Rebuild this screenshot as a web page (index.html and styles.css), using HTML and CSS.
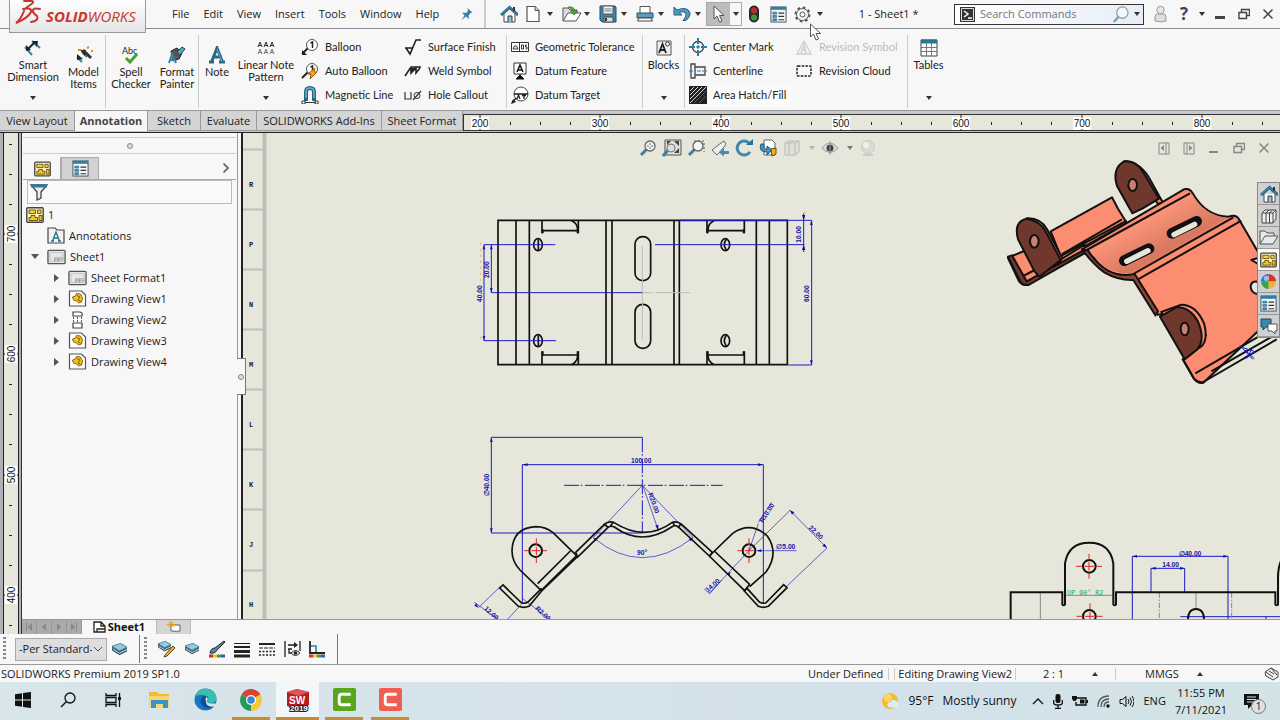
FILE: index.html
```html
<!DOCTYPE html>
<html lang="en">
<head>
<meta charset="utf-8">
<title>SOLIDWORKS Premium 2019 SP1.0</title>
<link rel="stylesheet" href="styles.css">
</head>
<body>
<svg class="defs" aria-hidden="true">
  <defs>
    <linearGradient id="valley" x1="0" y1="0" x2="1" y2="1"><stop offset="0" stop-color="#fc8d70"/><stop offset=".35" stop-color="#fc9579"/><stop offset=".62" stop-color="#d87860"/><stop offset=".8" stop-color="#fc8d70"/></linearGradient>
    <symbol id="caret" viewBox="0 0 6 4"><path d="M0 0h6L3 4z" fill="#333"/></symbol>
    <symbol id="home" viewBox="0 0 18 18"><path d="M4 9v8h11V9" fill="#fff" stroke="#444"/><path d="M1 10L9.500 2.500 18 10" fill="none" stroke="#23627f" stroke-width="3"/><path d="M1 9.500L9.500 2 17 9.500" fill="none" stroke="#4c9cc0"/><path d="M8 17v-6h4v6" fill="#8fc1da" stroke="#333"/><path d="M14 2v4" stroke="#333" stroke-width="2"/></symbol>
    <symbol id="props" viewBox="0 0 18 18"><rect x="1" y="1" width="16" height="16" fill="#f2f7fa" stroke="#3b5365"/><path d="M1 2.500h16" stroke="#2d7fa4" stroke-width="3"/><path d="M3 6.500h4v2H3zM3 10h4v2H3zM3 13.500h4v2H3z" fill="#4d9dc2" stroke="#1d4a63" stroke-width=".6"/><path d="M9 7.500h6M9 11h6M9 14.500h6" stroke="#333" stroke-width="1.200"/></symbol>
    <symbol id="drawing" viewBox="0 0 18 16"><rect x=".8" y=".8" width="16.400" height="14.400" rx="1" fill="#fff6c8" stroke="#444" stroke-width="1.400"/><path d="M3 3h6.500v3.500H3zM11.500 3H15v3.500h-3.500z" fill="#fbd23a" stroke="#4b3a00" stroke-width=".8"/><path d="M5 8.500h4v2h2.500v3H3v-3h2zM13 8.500h3v5h-3z" fill="#f5c51f" stroke="#4b3a00" stroke-width=".8"/></symbol>
    <symbol id="part" viewBox="0 0 18 17"><path d="M1 1h12l4 4v11H1z" fill="#fff" stroke="#555" stroke-width="1.200"/><path d="M4 7l3-1 1-2.500 4 .5 2 4-1 4-3 1-2-2-3-1z" fill="#f6c21c" stroke="#5d4500" stroke-width=".8"/><path d="M8.500 5.500l3 1.500-2 3 2.500 1" fill="none" stroke="#5d4500" stroke-width=".8"/></symbol>
    <symbol id="layers" viewBox="0 0 18 16"><path d="M1 5l9-3 7 4v4l-8 4-8-5z" fill="#3d5b68"/><path d="M1 4.500L10 1.500l7 4-8 4z" fill="#8fcbe3" stroke="#4a7f97"/><path d="M2 7.500l7 4.500 8-4" fill="none" stroke="#d7e6ec"/></symbol>
    <symbol id="sheet" viewBox="0 0 20 16"><rect x="1" y="1" width="18" height="14" rx="1" fill="#f4f4f4" stroke="#555" stroke-width="1.400"/><path d="M3 3h14v10H3z" fill="#e6e6e6" stroke="#bbb"/><path d="M8 13V9h9M12 9v4M8 11h9" fill="none" stroke="#999"/></symbol>
    <symbol id="pointer" viewBox="0 0 12 18"><path d="M1 1v13l3-3 2.500 6 2.500-1-2.500-5.500H11z" fill="#fff" stroke="#555" stroke-linejoin="round"/></symbol>
    <symbol id="lens" viewBox="0 0 18 18"><path d="M8 10l-6 6" stroke="#3b7fa3" stroke-width="3"/><circle cx="11" cy="7" r="5" fill="#f3f6f6" stroke="#666" stroke-width="1.300"/></symbol>
    <symbol id="search" viewBox="0 0 18 18"><path d="M7 11l-5 6" stroke="#7f9fb3" stroke-width="2.500"/><circle cx="11" cy="7" r="6" fill="#f5f9fc" stroke="#7f9fb3" stroke-width="1.300"/></symbol>
    <symbol id="restore" viewBox="0 0 12 12"><path d="M3.500 4V1.500h8v6H8.500M1 4.500h7.500v6H1z" fill="none" stroke="currentColor" stroke-width="1.400"/></symbol>
    <symbol id="close" viewBox="0 0 12 12"><path d="M1.500 1.500l9 9M10.500 1.500l-9 9" stroke="currentColor" stroke-width="1.500"/></symbol>
    <symbol id="camtasia" viewBox="0 0 24 24"><path d="M18.500 6.500H9Q6.500 6.500 6.500 9v6q0 2.500 2.500 2.500h9.500" fill="none" stroke="#fff" stroke-width="3"/></symbol>
  </defs>
</svg>

<header class="titlebar">
  <div class="logo">
    <svg width="27" height="28" viewBox="0 0 27 28"><g fill="none" stroke="#c8372d" stroke-width="2" stroke-linecap="round"><path d="M9 2h8q3 1-2 4l-4 3"/><path d="M8 10q9-2 8 3-3 6-15 11 5-4 8-12"/><path d="M25 10q-8-2-7 3 1 2 4 4 2 5-6 6"/></g></svg>
    <span><b>SOLID</b>WORKS</span>
  </div>
  <nav class="menu">
    <button>File</button><button>Edit</button><button>View</button><button>Insert</button><button>Tools</button><button>Window</button><button>Help</button>
  </nav>
  <button class="pin" aria-label="Pin menu"><svg width="14" height="14" viewBox="0 0 14 14"><path d="M7.500 1l5 4.500-2 .5-2 2.500.500 3.500L6 9.500 1.500 13 4.500 8.500 2 5.500l4 .5 2-2z" fill="#3a7fa5"/></svg></button>
  <div class="quick">
    <button class="q" aria-label="Home"><svg width="18" height="18"><use href="#home"/></svg></button>
    <button class="split" aria-label="New"><svg width="16" height="18" viewBox="0 0 16 18"><path d="M2 1.500h8l4 4v11H2z" fill="#fff" stroke="#555" stroke-width="1.200"/><path d="M10 1.500v4h4" fill="#ddd" stroke="#555"/></svg><svg class="caret"><use href="#caret"/></svg></button>
    <button class="split" aria-label="Open"><svg width="20" height="18" viewBox="0 0 20 18"><path d="M1 16V3h5l2 2h7v4" fill="#ddd" stroke="#555"/><path d="M1 16L6 8h13l-5 8z" fill="#fff" stroke="#555"/><path d="M6 2q6-1 7 4h2.500L12 10 8.500 6H11Q9 3 6 2z" fill="#50a62d" stroke="#2b6b14" stroke-width=".6"/></svg><svg class="caret"><use href="#caret"/></svg></button>
    <button class="split" aria-label="Save"><svg width="18" height="18" viewBox="0 0 18 18"><path d="M1 1h15l1 1v15H3l-2-2z" fill="#3e86aa" stroke="#234d63"/><path d="M4 1h10v8H4z" fill="#f4f4f4" stroke="#555"/><path d="M5.500 4h7M5.500 6h7" stroke="#777"/><path d="M5 12h9v5H5z" fill="#ddd" stroke="#444"/><path d="M7 13v3" stroke="#333" stroke-width="2"/></svg><svg class="caret"><use href="#caret"/></svg></button>
    <button class="split" aria-label="Print"><svg width="18" height="18" viewBox="0 0 18 18"><path d="M4 8V1.500h10V8" fill="#fff" stroke="#555"/><path d="M1 8h16v5H1z" fill="#599cc0" stroke="#285368"/><path d="M3 13h12l1.500 3h-15z" fill="#fff" stroke="#444"/></svg><svg class="caret"><use href="#caret"/></svg></button>
    <button class="split" aria-label="Undo"><svg width="18" height="18" viewBox="0 0 18 18"><path d="M1 2v8h8L6 7.500q6-2 7 2 0 3-3 6h3q5-4 4-8Q14 1 4 5z" fill="#4b9ac1" stroke="#28617e"/></svg><svg class="caret"><use href="#caret"/></svg></button>
    <div class="select-tool"><button aria-label="Select"><svg width="12" height="18"><use href="#pointer"/></svg></button><button aria-label="Selection options"><svg class="caret"><use href="#caret"/></svg></button></div>
    <button class="q" aria-label="Rebuild"><svg width="10" height="18" viewBox="0 0 10 18"><rect x=".5" y="1" width="9" height="16" rx="4.500" fill="#29352b" stroke="#222"/><circle cx="5" cy="5.500" r="3" fill="#bf2d25"/><circle cx="5" cy="12.500" r="3" fill="#3e9440"/></svg></button>
    <button class="q" aria-label="File properties"><svg width="17" height="17"><use href="#props"/></svg></button>
    <button class="q" aria-label="Options"><svg width="17" height="17" viewBox="0 0 17 17"><circle cx="8.500" cy="8.500" r="7" fill="none" stroke="#555" stroke-width="2" stroke-dasharray="2.750 2.750"/><circle cx="8.500" cy="8.500" r="6" fill="#f7f7f7" stroke="#555"/><circle cx="8.500" cy="8.500" r="2.500" fill="#fff" stroke="#555"/></svg></button>
    <svg class="caret gear-caret"><use href="#caret"/></svg>
  </div>
  <div class="doc-title">1 - Sheet1 *</div>
  <div class="search">
    <svg width="15" height="15" viewBox="0 0 15 15"><rect width="15" height="15" fill="#333"/><path d="M1.500 1.500h12v12h-12z" fill="none" stroke="#ddd"/><path d="M4 4l4 3-4 3M8 11h4" fill="none" stroke="#fff" stroke-width="1.500"/></svg>
    <input type="text" placeholder="Search Commands" aria-label="Search Commands">
    <svg width="17" height="17"><use href="#search"/></svg>
    <svg class="caret"><use href="#caret"/></svg>
  </div>
  <div class="window-controls">
    <button aria-label="Account"><svg width="13" height="18" viewBox="0 0 13 18"><path d="M1 16V12q0-3 3-3h5q3 0 3 3v4q-5 2-11 0z" fill="#ddd" stroke="#999"/><circle cx="6.500" cy="5" r="3.700" fill="#e8e8e8" stroke="#999"/></svg></button>
    <button class="help" aria-label="Help topics">?</button>
    <button aria-label="Help menu"><svg class="caret"><use href="#caret"/></svg></button>
    <button aria-label="Minimize"><svg width="10" height="10"><path d="M0 8.500h10" stroke="#444" stroke-width="3"/></svg></button>
    <button aria-label="Restore"><svg width="12" height="12"><use href="#restore"/></svg></button>
    <button aria-label="Close"><svg width="12" height="12"><use href="#close"/></svg></button>
  </div>
  <svg class="mouse" width="13" height="18"><use href="#pointer"/></svg>
</header>

<section class="ribbon" aria-label="Annotation tools">
  <button class="big w58 drop"><svg width="20" height="18" viewBox="0 0 20 18"><path d="M2 8l7 8M9 2l8 7" stroke="#2f89ad" stroke-width="2"/><path d="M5 10l7-7" stroke="#222" stroke-width="2"/><path d="M3 12V6l5 5zM9 2h6l-1 6z" fill="#222"/></svg><span>Smart<br>Dimension</span><svg class="caret"><use href="#caret"/></svg></button>
  <button class="big w43"><svg width="18" height="18" viewBox="0 0 18 18"><path d="M2 11l5 5M7 6l5 5" stroke="#2f89ad" stroke-width="2"/><path d="M2 14V8l6 5zM5 4h6l-1 6z" fill="#222"/><path d="M8 4l8 8" stroke="#333" stroke-width="3"/><path d="M3 4h3M12 2l2-1M16 5h2" stroke="#e28a2b" stroke-width="2"/></svg><span>Model<br>Items</span></button>
  <i class="sep"></i>
  <button class="big w50"><svg width="20" height="18" viewBox="0 0 20 18"><text x="1" y="8" class="abc">Abc</text><path d="M5 12l4 4 7-8" fill="none" stroke="#49a02e" stroke-width="3"/></svg><span>Spell<br>Checker</span></button>
  <button class="big w42"><svg width="18" height="18" viewBox="0 0 18 18"><path d="M3 5l6-3 5 5-3 6-6 2z" fill="#555" stroke="#222"/><path d="M9 6l5-5 3 2-5 6z" fill="#57a5ca" stroke="#244"/><path d="M1 17l3-9 4 9M2.500 14h5" fill="none" stroke="#3a83a8" stroke-width="2"/></svg><span>Format<br>Painter</span></button>
  <i class="sep"></i>
  <button class="big w36"><svg width="18" height="18" viewBox="0 0 18 18"><path d="M1 16h5M11 16h6M3.500 16L9 2l5.500 14M5 11h7" fill="none" stroke="#2c6684" stroke-width="3"/><path d="M9 3l5 13" stroke="#62adcf"/></svg><span>Note</span></button>
  <button class="big w62 drop"><svg width="18" height="18" viewBox="0 0 18 18"><path d="M1 8l2-5 2 5M7 8l2-5 2 5M13 8l2-5 2 5M1.500 6.500h3M7.500 6.500h3M13.500 6.500h3" fill="none" stroke="#333"/><path d="M1 15l2-5 2 5M7 15l2-5 2 5M13 15l2-5 2 5M1.500 13.500h3M7.500 13.500h3M13.500 13.500h3" fill="none" stroke="#777"/></svg><span>Linear Note<br>Pattern</span><svg class="caret"><use href="#caret"/></svg></button>
  <div class="stack w103">
    <button><svg width="18" height="18" viewBox="0 0 18 18"><path d="M1 16l6-6" stroke="#222" stroke-width="2"/><path d="M1 12v5h5z" fill="#222"/><circle cx="11" cy="7" r="5.500" fill="#fff" stroke="#555"/><path d="M9.500 5l2-1v6" fill="none" stroke="#222" stroke-width="1.500"/></svg>Balloon</button>
    <button><svg width="18" height="18" viewBox="0 0 18 18"><path d="M1 16l6-6" stroke="#222" stroke-width="2"/><circle cx="11" cy="7" r="5.500" fill="#fff" stroke="#555"/><path d="M9.500 5l2-1v6" fill="none" stroke="#222" stroke-width="1.500"/><path d="M14 6l-7 6h3l-1 5 7-7h-3z" fill="#f7a824" stroke="#9a5b0b"/></svg>Auto Balloon</button>
    <button><svg width="18" height="18" viewBox="0 0 18 18"><path d="M5 15V6q0-4 4-4t4 4v9" fill="none" stroke="#2d617d" stroke-width="4"/><path d="M5 12V6q0-4 4-4t4 4v6" fill="none" stroke="#68b3d4" stroke-width="1.500"/><path d="M4 16.500h11M1 15h3v3H1zM14 15h3v3h-3z" fill="#fff" stroke="#333"/></svg>Magnetic Line</button>
  </div>
  <div class="stack w106">
    <button><svg width="18" height="18" viewBox="0 0 18 18"><path d="M1 10h8M2 10l4 6 6-14h5" fill="none" stroke="#222" stroke-width="1.600"/></svg>Surface Finish</button>
    <button><svg width="18" height="18" viewBox="0 0 18 18"><path d="M1 14L7 5h10M7 5v6l5-5v5l4-5" fill="none" stroke="#222" stroke-width="1.600"/><path d="M7 6v5l5-5z" fill="#222"/></svg>Weld Symbol</button>
    <button><svg width="18" height="18" viewBox="0 0 18 18"><path d="M1 6v7h6V6M9 14l8-9" fill="none" stroke="#333" stroke-width="1.200"/><circle cx="13" cy="9.500" r="3" fill="none" stroke="#333"/></svg>Hole Callout</button>
  </div>
  <i class="sep"></i>
  <div class="stack w135">
    <button><svg width="18" height="18" viewBox="0 0 18 18"><path d="M.5 4.500h17v9H.5zM8.500 4.500v9M2 11h5L5.500 8h-2z" fill="#fff" stroke="#333"/><path d="M10.500 7h2v4h-2zM16 7h-1.500v2H16v2h-1.500" fill="none" stroke="#333"/></svg>Geometric Tolerance</button>
    <button><svg width="18" height="18" viewBox="0 0 18 18"><path d="M3 1h12v11H3z" fill="#fff" stroke="#333"/><path d="M6 10l3-7 3 7M7 8h4" fill="none" stroke="#111" stroke-width="1.500"/><path d="M9 12v3M5 17l4-4 4 4z" fill="#111" stroke="#111"/></svg>Datum Feature</button>
    <button><svg width="18" height="18" viewBox="0 0 18 18"><circle cx="10" cy="8" r="7" fill="#fff" stroke="#444"/><path d="M3 8h14M6 13l1.500-4L9 13M11 9.500h4M13 9.500V13M1 17l4-5" fill="none" stroke="#222" stroke-width="1.300"/><path d="M0 18l2-5 3 3z" fill="#222"/></svg>Datum Target</button>
  </div>
  <i class="sep"></i>
  <button class="big w41 drop"><svg width="18" height="18" viewBox="0 0 18 18"><path d="M2 2h14v14H2z" fill="#eee" stroke="#555"/><path d="M4 14l3.500-9L11 14M5.500 11h4" fill="none" stroke="#222" stroke-width="1.800"/><circle cx="12.500" cy="5" r="2" fill="#fff" stroke="#333"/></svg><span>Blocks</span><svg class="caret"><use href="#caret"/></svg></button>
  <i class="sep"></i>
  <div class="stack w106">
    <button><svg width="18" height="18" viewBox="0 0 18 18"><circle cx="9" cy="9" r="5.500" fill="none" stroke="#333" stroke-width="1.300"/><path d="M9 0v6M9 12v6M0 9h6M12 9h6M7.500 9h3M9 7.500v3" stroke="#2580a8" stroke-width="2"/></svg>Center Mark</button>
    <button><svg width="18" height="18" viewBox="0 0 18 18"><path d="M2 2h4v14H2zM6 5h10v8H6z" fill="#f4f4f4" stroke="#444" stroke-width="1.300"/><path d="M0 9h18" stroke="#2580a8" stroke-dasharray="4 1 2 1"/></svg>Centerline</button>
    <button class="hot"><svg width="18" height="18" viewBox="0 0 18 18"><path d="M0 0h18v18H0z" fill="#222"/><path d="M1 5l4-4M1 9l8-8M1 13L13 1M1 17L17 1" stroke="#ddd"/><path d="M5 17L17 5M10 17l7-7" stroke="#555"/></svg>Area Hatch/Fill</button>
  </div>
  <div class="stack w116">
    <button disabled><svg width="18" height="18" viewBox="0 0 18 18"><path d="M2 16L9 3l7 13zM6 15l3-8 2 8M7 12h4" fill="none" stroke="#ccc" stroke-width="1.300"/></svg>Revision Symbol</button>
    <button><svg width="18" height="18" viewBox="0 0 18 18"><rect x="2" y="4" width="14" height="10" rx="1" fill="none" stroke="#222" stroke-width="1.500" stroke-dasharray="2.500 1.200"/></svg>Revision Cloud</button>
  </div>
  <i class="sep"></i>
  <button class="big w41 drop"><svg width="18" height="18" viewBox="0 0 18 18"><path d="M1 1h16v16H1z" fill="#fff" stroke="#444"/><path d="M1 2.500h16" stroke="#277493" stroke-width="4"/><path d="M1 8.500h16M1 12.500h16M6.500 4v13M11.500 4v13" stroke="#777"/></svg><span>Tables</span><svg class="caret"><use href="#caret"/></svg></button>
</section>

<div class="tabrow">
  <nav class="tabs">
    <button class="t75">View Layout</button><button class="t73 on">Annotation</button><button class="t53">Sketch</button><button class="t56">Evaluate</button><button class="t125">SOLIDWORKS Add-Ins</button><button class="t80">Sheet Format</button>
  </nav>
  <svg class="hruler" aria-hidden="true">
    <g id="hticks"></g>
  </svg>
</div>

<main class="work">
  <svg class="vruler" aria-hidden="true"><g id="vticks"></g></svg>
  <div class="document">
    <div class="upper">
      <aside class="manager">
        <div class="grip-dot"><i class="dot"></i></div>
        <div class="mtabs">
          <button class="on" aria-label="Feature tree"><svg width="17" height="16"><use href="#drawing"/></svg></button>
          <button aria-label="Property manager"><svg width="17" height="17"><use href="#props"/></svg></button>
          <button class="more" aria-label="More tabs"><svg width="8" height="12" viewBox="0 0 8 12"><path d="M1.500 1.500L6 6l-4.500 4.500" fill="none" stroke="#555" stroke-width="1.600"/></svg></button>
        </div>
        <div class="filter"><svg width="18" height="18" viewBox="0 0 18 18"><path d="M1 2h16l-6 7v6l-4 2V9z" fill="#e9eff2" stroke="#444" stroke-width="1.300"/><path d="M1 3h16" stroke="#2a7ba1" stroke-width="3"/></svg><input type="text" aria-label="Filter tree"></div>
        <ul class="tree">
          <li class="l0"><svg width="18" height="16"><use href="#drawing"/></svg>1</li>
          <li class="l1"><i></i><svg width="18" height="17" viewBox="0 0 18 17"><path d="M1 4V1h7l2 2h7v13H1z" fill="#f2f2f2" stroke="#444" stroke-width="1.200"/><path d="M5.500 14L9 5l3.500 9M6.500 11h5M4 14h3M11 14h3" fill="none" stroke="#1c6f8e" stroke-width="1.300"/></svg>Annotations</li>
          <li class="l1"><i class="open"></i><svg width="19" height="16"><use href="#sheet"/></svg>Sheet1</li>
          <li class="l2"><i class="shut"></i><svg width="19" height="16"><use href="#sheet"/></svg>Sheet Format1</li>
          <li class="l2"><i class="shut"></i><svg width="19" height="17"><use href="#part"/></svg>Drawing View1</li>
          <li class="l2"><i class="shut"></i><svg width="19" height="18" viewBox="0 0 19 18"><path d="M5 1h7l2 1v3H5zM5 12h9v5H5z" fill="#fff" stroke="#444" stroke-width="1.200"/><path d="M5.500 6v6M9.500 6v6M13.500 6v6" stroke="#246f93" stroke-dasharray="2 1"/></svg>Drawing View2</li>
          <li class="l2"><i class="shut"></i><svg width="19" height="17"><use href="#part"/></svg>Drawing View3</li>
          <li class="l2"><i class="shut"></i><svg width="19" height="17"><use href="#part"/></svg>Drawing View4</li>
        </ul>
        <button class="handle" aria-label="Collapse panel"><i class="dot"></i></button>
      </aside>
      <div class="canvas">
        <svg class="sheet" role="img" aria-label="Sheet1 drawing views"><g transform="translate(-243 -133)">
          <g class="zone"><path d="M243 149.500h20M243 209.500h20M243 269.500h20M243 329.500h20M243 389.500h20M243 449.500h20M243 509.500h20M243 570.500h20" stroke-width="2"/><path d="M264.500 133v500" stroke-width="4"/></g>
          <g class="letters"><text x="249" y="187">R</text><text x="249" y="247">P</text><text x="249" y="307">N</text><text x="249" y="367">M</text><text x="249" y="427">L</text><text x="249" y="487">K</text><text x="249" y="547">J</text><text x="249" y="607">H</text></g>

          <g transform="translate(465 200) scale(.333333)" class="ink">
            <path d="M99 61h868v433H99zM153 61v433M193 61v433M423 61v433M441 61v433M627 61v433M643 61v433M874 61v433M913 61v433"/>
            <path d="M231 62v38M231 92h109M340 100V62M726 62v38M838 62v38M728 92h109M231 454v38M340 454v38M231 465h109M726 454v38M838 454v38M728 465h109"/>
            <path class="heavy" d="M233 88v12M338 88v12M728 88v12M836 88v12M233 454v12M338 454v12M728 454v12M836 454v12" stroke-width="8"/>
            <rect x="510" y="110" width="47" height="132" rx="23"/><rect x="510" y="313" width="47" height="132" rx="23"/>
            <path d="M320 62q18 8 18 28M747 62q-18 8-18 28M320 494q18-8 18-28M747 494q-18-8-18-28"/>
            <ellipse cx="219" cy="134" rx="13" ry="18"/><path d="M220 118v32"/>
            <ellipse cx="219" cy="422" rx="13" ry="18"/><path d="M220 406v32"/>
            <ellipse cx="781" cy="134" rx="13" ry="18"/><path d="M784 118q-12 16 0 32"/>
            <ellipse cx="781" cy="422" rx="13" ry="18"/><path d="M784 406q-12 16 0 32"/>
            <path class="faint" d="M532 138v280M532 278h32M572 278h104"/>
            <path class="dim" d="M57 134h214M57 422h216M57 134v288M79 134v144h453M570 134h448M643 61h397v434h-70M1016 40v116"/>
            <path class="arrow" d="M1016 61l-5-16h10zM1016 134l-5 16h10zM57 134l-4 14h8zM57 422l-4-14h8zM79 278l-4-14h8zM79 134l-4 14h8zM1039 61l-4 14h8zM1039 495l-4-14h8z"/>
            <path class="grips" d="M47 128v126M47 410v14M1020 34v8"/>
            <g class="note"><text transform="translate(51 306) rotate(-90)">40.00</text><text transform="translate(71 234) rotate(-90)">20.00</text><text transform="translate(1008 128) rotate(-90)">10.00</text><text transform="translate(1031 306) rotate(-90)">60.00</text></g>
          </g>

          <g transform="translate(465 425) scale(.333333)" class="ink">
            <path class="dim" d="M532 37H79v287h453"/>
            <path class="dim dash" d="M532 37v285"/>
            <path class="dim" d="M172 535V119h723v416"/>
            <path class="dim dash" d="M297 181h476"/>
            <path class="dim thin" d="M532 181L385 338M532 181l152 157M385 338q145 120 299 0M535 186l45 130M105 486L40 548M28 532l73 52M127 584l42-46M172 520l84 65M852 377l123-121 111 113-122 116M852 377L733 505M718 492l16 14 36-40M875 377h120M880 296l-28 81M880 292l40-60"/>
            <path class="arrow" d="M172 119l16-4v8zM895 119l-16-4v8zM79 37l-4 14h8zM79 324l-4-14h8zM580 316l-9-14 9-3zM385 338l13 4-7 7zM684 338l-13 4 7 7zM975 256l13 6-7 7zM1086 369l-14-6 7-7zM797 440l-4 13-7-7zM875 377l14-4v8zM40 548l-12-6 6-7z"/>
            <path d="M165 435q-24-26-24-58 2-68 71-72 30 0 52 18l70 68M165 435l64 62M218 476l98-98M335 392l-106 104"/>
            <path d="M338 394L230 498l-38 46q-16 6-32 0L104 489l10-9 56 54q10 2 18-2l42-42M332 382l86-84q12-10 28-6 94 60 176 0 16-4 28 6l92 84-8 12-94-88q-10-8-20 0-90 60-172 0-14-6-22 4l-88 86zM416 296l12 10M446 290l-10 14M622 290l8 14M650 296l-12 12"/>
            <path d="M733 393l70-68q54-38 104 8 36 52-4 108l-49 44M748 378l106 100M733 393l108 106M854 478l-16 20"/>
            <path d="M838 498l42 46q14 6 30 0l56-56-10-9-54 55q-9 2-18-2l-38-42z"/>
            <circle cx="212" cy="377" r="19" class="heavy"/><circle cx="852" cy="377" r="19" class="heavy"/>
            <path class="red" d="M177 377h14M199 377h27M234 377h12M214 340v20M214 366v24M214 398v16M817 377h14M839 377h27M852 340v20M852 366v24M852 398v16"/>
            <g class="note"><text x="498" y="113">100.00</text><text transform="translate(71 214) rotate(-90)">∅40.00</text><text x="516" y="390">90°</text><text transform="translate(549 206) rotate(70)">R20.00</text><text transform="translate(893 294) rotate(-56)">R10.00</text><text transform="translate(1030 310) rotate(43)">22.00</text><text x="934" y="371">∅5.00</text><text transform="translate(728 502) rotate(-40)">14.00</text><text transform="translate(56 552) rotate(43)">12.00</text><text transform="translate(210 552) rotate(43)">R2.00</text></g>
          </g>

          <g transform="translate(990 530) scale(.333333)" class="ink">
            <path class="dim" d="M427 285V79h287v206M483 186v-71h101v71M571 260h330M828 260v25"/>
            <path class="hidden-edge" d="M151 188v100M225 196h146M618 188v48"/><path class="hidden-edge dots" d="M508 188v100M725 188v100"/>
            <path class="heavy" d="M62 285v-98h155v36q4 6 8 0V100q10-62 73-62 62 0 72 62v123q4 6 8 0v-36h478v36q4 6 8 0v-80q0-44 20-70"/>
            <circle cx="298" cy="109" r="19" class="heavy"/><circle cx="298" cy="259" r="19" class="heavy"/><path class="heavy" d="M594 275q-2-38 24-38t24 38"/>
            <path class="red" d="M258 109h18M284 109h28M320 109h16M297 72v18M297 96v26M297 130v16M260 259h18M284 259h28M320 259h18M300 220v18M300 246v26"/>
            <path class="arrow" d="M427 79l14-4v8zM714 79l-14-4v8zM483 115l14-4v8zM584 115l-14-4v8z"/>
            <g class="note"><text x="566" y="77">∅40.00</text><text x="517" y="110">14.00</text><text x="232" y="195" class="bend">UP 90° R2</text></g>
          </g>

          <g transform="translate(990 130) scale(.333333)" class="solid">
            <path d="M182 304L366 202l18 34 26 42-194 110z" />
            <path d="M66 378l90-38 60 46 68-42 6 22-178 98q-16 4-26-12L54 384z"/>
            <path class="dark" d="M54 380l12-4 44 78 174-95v10L116 465q-18 2-26-12z"/>
            <path class="line" d="M100 438l116-62 194-104M216 372l180-104"/>
            <path d="M400 95q24-6 50 16 20 18 28 34l40 72-14 5-50-70-20-30z"/>
            <path class="dark" d="M427 250l-46-82q-16-54 22-74 36-2 56 32l48 80-50 30z"/>
            <ellipse cx="428" cy="165" rx="13" ry="18" class="hole"/>
            <path d="M110 265q42-2 62 34l44 84-10 20-60-80z"/>
            <path class="dark" d="M134 425L84 328q-14-54 26-62 38 6 56 36l46 88-64 50z"/>
            <ellipse cx="133" cy="334" rx="13" ry="19" class="hole"/>
            <path d="M276 358l306-180q18-4 26 12 40 70 108 70 24-8 32 10l70 120v200L640 758q-16 4-28-12l-34-58 70-72-60-72-86 10-70-108q-28 4-66-12-36-20-54-50z"/>
            <path class="bowl" d="M302 360l304-168q36 64 108 72L434 430q-90 6-132-70z"/>
            <path class="line" d="M290 360l310-170M430 432l300-170M444 448l310-176"/>
            <path d="M276 358l18 4q26 40 60 60 40 20 80 10l70 112-8 12-66-106q-44 2-86-22-32-22-68-70z" class="edge"/>
            <path class="slot" d="M403 392l74-36M546 310l74-36"/><path class="opening" d="M410 394l64-32M552 314l62-31"/>
            <path d="M514 546l60-22q44 0 68 56 16 60-18 76l-38 30z"/>
            <path class="dark" d="M584 688L510 560l52-29q40 2 62 44 24 56-4 84z"/>
            <ellipse cx="584" cy="597" rx="12" ry="19" class="hole"/>
            <path class="line" d="M578 686l34 60q12 14 28 10l220-128M616 730l210-122M664 724l182-104"/>
            <path class="gap-cut" d="M806 456q-24-6-24 16 4 20 24 20zM784 390l28-8v24z"/>
            <path class="scribble" d="M750 646l38 42M750 650l45 15-30 16M765 660l28 26M790 650l-20 35"/>
          </g>
        </g></svg>

        <div class="view-tools">
          <button aria-label="Zoom to fit"><svg width="18" height="18" viewBox="0 0 18 18"><use href="#lens"/><path d="M11 4v6M8 7h6" stroke="#666" stroke-dasharray="2 2"/></svg></button>
          <button aria-label="Zoom window"><svg width="20" height="18" viewBox="0 0 20 18"><path d="M3 1h16v15H3z" fill="#ddd" stroke="#555"/><path d="M12 2h5v5zM17 9v5h-5zM5 2h4L5 6z" fill="#444"/><path d="M7 10l-6 7" stroke="#3b7fa3" stroke-width="3"/><circle cx="9" cy="9" r="4" fill="#ddd" stroke="#777"/></svg></button>
          <button aria-label="Zoom area"><svg width="18" height="18" viewBox="0 0 18 18"><path d="M7 2h10v11" fill="none" stroke="#555" stroke-dasharray="2 2"/><use href="#lens"/></svg></button>
          <button aria-label="Previous view"><svg width="18" height="18" viewBox="0 0 18 18"><path d="M1 11l9-7 3-2 2 3-2 3-7 8z" fill="#eee" stroke="#666"/><path d="M18 12h-5V9l-5 4.500 5 4V15h5z" fill="#438bb4"/></svg></button>
          <button aria-label="Rotate"><svg width="20" height="20" viewBox="0 0 20 20"><path d="M16 14a7 7 0 1 1-1-9" fill="none" stroke="#3f86ab" stroke-width="3"/><path d="M12 7h7V1z" fill="#2c6f94"/></svg></button>
          <button aria-label="3D view"><svg width="18" height="18" viewBox="0 0 18 18"><path d="M5 1h8l3 3v12H5z" fill="#fff" stroke="#666"/><path d="M2 5q-3 8 6 8v3l5-5-5-4v3Q4 10 5 5z" fill="#4293bd" stroke="#24586f"/><path d="M12 10l5-1v6l-4 2z" fill="#edb41f" stroke="#664c00"/></svg></button>
          <button class="wide dim-icon" aria-label="Display style"><svg width="18" height="18" viewBox="0 0 18 18"><path d="M2 4l4-2h10v11l-4 3H2zM2 4h10v12M12 4l4-2M6 4v12" fill="#ddd" stroke="#888"/></svg><svg class="caret"><use href="#caret"/></svg></button>
          <button class="wide" aria-label="Hide or show"><svg width="18" height="14" viewBox="0 0 18 14"><path d="M1 7q8-10 16 0-8 9-16 0z" fill="#ddd" stroke="#999"/><circle cx="9" cy="7" r="3.500" fill="#444"/><path d="M9 0v14" stroke="#999"/></svg><svg class="caret"><use href="#caret"/></svg></button>
          <button class="dim-icon" aria-label="Scene"><svg width="16" height="18" viewBox="0 0 16 18"><circle cx="8" cy="8" r="6.500" fill="#ccc" stroke="#aaa"/><circle cx="6" cy="6" r="3" fill="#fff"/><path d="M3 16h10" stroke="#aaa" stroke-width="2"/></svg></button>
        </div>
        <div class="doc-controls">
          <button aria-label="Previous pane"><svg width="12" height="13" viewBox="0 0 12 13"><path d="M1 1h10v11H1zM8 1v11" fill="none" stroke="currentColor"/><path d="M6 3v6L2.500 6z" fill="currentColor"/></svg></button>
          <button aria-label="Next pane"><svg width="12" height="13" viewBox="0 0 12 13"><path d="M1 1h10v11H1zM4 1v11" fill="none" stroke="currentColor"/><path d="M6 3v6l3.500-3z" fill="currentColor"/></svg></button>
          <button aria-label="Minimize document"><svg width="12" height="12"><path d="M1 10h9" stroke="currentColor" stroke-width="2"/></svg></button>
          <button aria-label="Restore document"><svg width="12" height="12"><use href="#restore"/></svg></button>
          <button aria-label="Close document"><svg width="12" height="12"><use href="#close"/></svg></button>
        </div>
        <nav class="taskpane">
          <button aria-label="Resources"><svg width="18" height="18"><use href="#home"/></svg></button>
          <button aria-label="Design library"><svg width="18" height="18" viewBox="0 0 18 18"><path d="M2 6l3-3h11v9l-3 4H2zM2 6h11v10M13 6l3-3M6 6v10M9.500 6v10M6 6l3-3M9.500 6l3-3" fill="#eee" stroke="#444"/></svg></button>
          <button aria-label="File explorer"><svg width="19" height="17" viewBox="0 0 19 17"><path d="M1 15V2h5l2 2h7v3M1 15L6 7h13l-5 8z" fill="#e8e8e8" stroke="#555"/></svg></button>
          <button class="on" aria-label="View palette"><svg width="17" height="16"><use href="#drawing"/></svg></button>
          <button aria-label="Appearances"><svg width="17" height="17" viewBox="0 0 16 16"><path d="M8 8V1a7 7 0 0 0-7 7z" fill="#2b6fd0"/><path d="M8 8V1a7 7 0 0 1 7 7z" fill="#d63429"/><path d="M8 8h7a7 7 0 0 1-7 7z" fill="#f1b72b"/><path d="M8 8v7a7 7 0 0 1-7-7z" fill="#3ba144"/><circle cx="6" cy="5" r="2.500" fill="#fff" opacity=".55"/></svg></button>
          <button aria-label="Custom properties"><svg width="17" height="17"><use href="#props"/></svg></button>
          <button aria-label="Forum"><svg width="18" height="16" viewBox="0 0 18 16"><path d="M1 1h10v8H6l-3 3V9H1z" fill="#3c88ad" stroke="#245"/><path d="M8 6h9v7h-2v3l-3-3H8z" fill="#fff" stroke="#555"/></svg></button>
        </nav>
      </div>
    </div>
    <div class="sheettabs">
      <button class="nav" aria-label="First sheet"><svg width="8" height="8" viewBox="0 0 8 8"><path d="M7 0v8L3 4zM1 0h1v8H1z" fill="#888"/></svg></button><button class="nav" aria-label="Previous sheet"><svg width="8" height="8" viewBox="0 0 8 8"><path d="M6 0v8L2 4z" fill="#888"/></svg></button><button class="nav" aria-label="Next sheet"><svg width="8" height="8" viewBox="0 0 8 8"><path d="M2 0v8l4-4z" fill="#888"/></svg></button><button class="nav" aria-label="Last sheet"><svg width="8" height="8" viewBox="0 0 8 8"><path d="M1 0v8l4-4zM6 0h1v8H6z" fill="#888"/></svg></button>
      <button class="current"><svg width="13" height="12" viewBox="0 0 13 12"><path d="M1 1h7l4 4v6H1zM8 1v4h4M4 11V8h8" fill="#fff" stroke="#222" stroke-width="1.300"/></svg>Sheet1</button>
      <button class="add" aria-label="Add sheet"><svg width="14" height="12" viewBox="0 0 14 12"><path d="M4 4h9v6h-2l-2 1-1-1H4z" fill="#fff" stroke="#567"/><path d="M4 0v7M0 3.500h8M1.500 1l5 5M6.500 1l-5 5" stroke="#e99a1f"/></svg></button>
    </div>
  </div>
</main>

<section class="layerbar" aria-label="Line format">
  <i class="grip"></i>
  <select aria-label="Layer"><option>-Per Standard-</option></select>
  <button aria-label="Layer properties"><svg width="17" height="15"><use href="#layers"/></svg></button>
  <i class="vsep"></i><i class="grip"></i>
  <div class="format">
    <button aria-label="Change layer"><svg width="19" height="18" viewBox="0 0 19 18"><use href="#layers" width="15" height="13"/><path d="M8 15l8-9 2 2-8 8-3 1z" fill="#f3b33a" stroke="#5f4310"/></svg></button>
    <button aria-label="Layer"><svg width="16" height="14"><use href="#layers"/></svg></button>
    <button aria-label="Line color"><svg width="18" height="18" viewBox="0 0 18 18"><path d="M2 13q1-5 5-5l9-7 1 1-8 8q-2 4-7 3z" fill="#4b8dac" stroke="#222"/><path d="M1 16h4" stroke="#c33" stroke-width="3"/><path d="M5 16h4" stroke="#eec32a" stroke-width="3"/><path d="M9 16h4" stroke="#3a9f55" stroke-width="3"/><path d="M13 16h4" stroke="#4752ba" stroke-width="3"/></svg></button>
    <button aria-label="Line thickness"><svg width="18" height="18" viewBox="0 0 18 18"><path d="M1 3.500h16" stroke="#222"/><path d="M1 7h16" stroke="#222" stroke-width="2"/><path d="M1 11.500h16M1 16h16" stroke="#222" stroke-width="3"/></svg></button>
    <button aria-label="Line style"><svg width="18" height="18" viewBox="0 0 18 18"><path d="M1 4h16" stroke="#222" stroke-width="2"/><path d="M1 8h16" stroke="#222" stroke-dasharray="4 1"/><path d="M1 11.500h16M1 15h16" stroke="#222" stroke-width="1.500" stroke-dasharray="2 1.500"/></svg></button>
    <button aria-label="Hide or show edges"><svg width="18" height="18" viewBox="0 0 18 18"><path d="M2 1v16M5 5h8M17 1v10M5 9h4M6 9v4h3" fill="none" stroke="#222" stroke-width="1.300"/><path d="M11 2l4 3-4 3z" fill="#222"/><path d="M8 13q5-5 9 0-5 5-9 0z" fill="#ddd" stroke="#333"/><circle cx="12.500" cy="13" r="1.700" fill="#222"/></svg></button>
    <button aria-label="Color display mode"><svg width="18" height="18" viewBox="0 0 18 18"><path d="M2 6h6v6" fill="none" stroke="#2f7fa5" stroke-width="1.600"/><path d="M2 1v12h15" fill="none" stroke="#222" stroke-width="1.800"/><path d="M1 16h4" stroke="#c33" stroke-width="3"/><path d="M5 16h4" stroke="#eec32a" stroke-width="3"/><path d="M9 16h4" stroke="#3a9f55" stroke-width="3"/><path d="M13 16h4" stroke="#4752ba" stroke-width="3"/></svg></button>
  </div>
</section>

<footer class="status">
  <span class="product">SOLIDWORKS Premium 2019 SP1.0</span>
  <span class="s-def">Under Defined</span><i class="gap"></i>
  <span class="s-edit">Editing Drawing View2</span>
  <button class="s-scale">2 : 1 <svg class="caret up"><use href="#caret"/></svg></button>
  <button class="s-unit">MMGS <svg class="caret up"><use href="#caret"/></svg></button>
  <svg width="15" height="14" viewBox="0 0 15 14"><path d="M1 5l6-4 7 4v5l-5 3-7-4zM7 1l6 7M2 5l7 5M5 4l5 3" fill="#eee" stroke="#444"/></svg>
</footer>

<nav class="taskbar">
  <button aria-label="Start"><svg width="16" height="16" viewBox="0 0 16 16"><path d="M0 2.200l7-1v6.300H0zM8 1l8-1v7.500H8zM0 8.500h7v6.300l-7-1zM8 8.500h8V16l-8-1z" fill="#111"/></svg></button>
  <button aria-label="Search"><svg width="16" height="16" viewBox="0 0 16 16"><circle cx="10" cy="6" r="5" fill="none" stroke="#111" stroke-width="1.300"/><path d="M6.500 9.500L1 15" stroke="#111" stroke-width="1.500"/></svg></button>
  <button aria-label="Task view"><svg width="16" height="16" viewBox="0 0 16 16"><path d="M1 1v2.500h10V1M1 5.500h10v5H1zM1 15v-2.500h10V15M14.500 1v14" fill="none" stroke="#111" stroke-width="1.300"/><path d="M13 5h3v3h-3z" fill="#111"/></svg></button>
  <button class="gap3" aria-label="File Explorer"><svg width="21" height="18" viewBox="0 0 21 18"><path d="M0 1h8l2 2h10v14H0z" fill="#f4b93a"/><path d="M0 5h20v12H0z" fill="#fbd667"/><path d="M2 17V9h17v8h-5v-4H7v4z" fill="#3a91d0"/></svg></button>
  <button aria-label="Edge"><svg width="23" height="23" viewBox="0 0 23 23"><circle cx="11.500" cy="11.500" r="11" fill="#1578c4"/><path d="M1 9Q4 0 12 .5q10 1 10.500 10-.5 4-5 4.500-4 0-4-2 2-3-1-5Q5 5 1 9z" fill="#37bfa9"/><path d="M9 8q-6 8 3 12 5 1 8-2-8 1-8-5 3-3 0-5z" fill="#0d4f98"/><path d="M12 9q3 1 1 4 0 2 4 2.500h6v2l-3 1q-8 1-8-5-1-3 0-4.500z" fill="#d6e4ec"/></svg></button>
  <button class="run" aria-label="Chrome"><svg width="22" height="22" viewBox="0 0 22 22"><path d="M11 11L1.500 5.500A11 11 0 0 1 20.500 5.500z" fill="#da4437"/><path d="M11 11L1.500 5.500A11 11 0 0 0 11 22z" fill="#249c59"/><path d="M11 11L20.500 5.500A11 11 0 0 1 11 22z" fill="#f6c83a"/><circle cx="11" cy="11" r="5" fill="#fff"/><circle cx="11" cy="11" r="3.800" fill="#4285c9"/></svg></button>
  <button class="run active" aria-label="SOLIDWORKS 2019"><svg width="24" height="24" viewBox="0 0 24 24"><path d="M1 4l10-3 12 3v13l-10 6L1 18z" fill="#b91c22"/><path d="M1 4l11 4 11-4-12-3z" fill="#de5658"/><path d="M12 8v14" stroke="#6f0c10"/><text x="3" y="16" class="sw">SW</text><text x="4" y="23" class="yr">2019</text></svg></button>
  <button class="run" aria-label="Camtasia"><svg class="cam green" width="23" height="23"><use href="#camtasia"/></svg></button>
  <button class="run" aria-label="Camtasia Recorder"><svg class="cam coral" width="23" height="23"><use href="#camtasia"/></svg></button>
  <div class="tray">
    <button class="weather"><svg width="18" height="18" viewBox="0 0 18 18"><circle cx="9" cy="9" r="8" fill="#f6b92f"/><circle cx="7" cy="6" r="4" fill="#fbd46a"/><path d="M7 15q-2-5 3-5 2-4 5-1 4 1 2 5-2 3-10 1z" fill="#dcecf8"/></svg><span>95°F</span><span>Mostly sunny</span></button>
    <button aria-label="Hidden icons"><svg width="12" height="8" viewBox="0 0 12 8"><path d="M1 7l5-5 5 5" fill="none" stroke="#111" stroke-width="1.300"/></svg></button>
    <button aria-label="Microphone"><svg width="10" height="15" viewBox="0 0 10 15"><rect x="2.500" width="5" height="9" rx="2" fill="#111"/><path d="M.7 6v3q0 2 4.300 2t4.300-2V6M5 11v3M2 14.300h6" fill="none" stroke="#111" stroke-width="1.300"/></svg></button>
    <button aria-label="Battery"><svg width="16" height="12" viewBox="0 0 16 12"><path d="M5 3h9v7H4V7" fill="none" stroke="#111" stroke-width="1.400"/><path d="M8 4.500h4.500v4H8zM14.500 5H16v3h-1.500zM0 1h5v3L3.500 6h-2L0 4z" fill="#111"/></svg></button>
    <button aria-label="Wi-Fi"><svg width="13" height="13" viewBox="0 0 13 13"><path d="M1 12Q1 1 12 1M4 12q0-8 8-8M7 12q0-5 5-5" fill="none" stroke="#555" stroke-width="1.300"/><circle cx="11" cy="11" r="1.700" fill="#111"/></svg></button>
    <button aria-label="Volume"><svg width="15" height="13" viewBox="0 0 15 13"><path d="M1 4.500h2.500L7 1.500v10L3.500 8.500H1zM9 4q2 2.500 0 5M11 2.500q3 4 0 8M13 1q4 5.500 0 11" fill="none" stroke="#111"/></svg></button>
    <button class="lang">ENG</button>
    <button class="clock">11:55 PM<br>7/11/2021</button>
    <button class="notify" aria-label="Notifications"><svg width="16" height="15" viewBox="0 0 16 15"><path d="M0 0h15v11H8l-4 4v-4H0z" fill="#111"/><path d="M3 3h9M3 5.500h9M3 8h6" stroke="#d6e4ec"/></svg><b>1</b></button>
  </div>
</nav>
<script src="rulers.js"></script>
</body>
</html>
```

FILE: rulers.js
```js
const NS = "http://www.w3.org/2000/svg";

function add(parent, tag, attrs, text) {
  const el = document.createElementNS(NS, tag);
  for (const key in attrs) el.setAttribute(key, attrs[key]);
  if (text) el.textContent = text;
  parent.appendChild(el);
}

// One hundred sheet millimetres take 120.3 screen pixels.
const STEP = 120.3;

const across = document.getElementById("hticks");
const width = across.parentNode.getBoundingClientRect().width;
for (let i = 0; 17 + i * STEP < width; i++) {
  const x = Math.round(16 + i * STEP);
  add(across, "rect", { x: x - 9, y: 2, width: 18, height: 13, fill: "#fff" });
  add(across, "path", { d: `M${x} 0v3M${x} 14v3`, stroke: "#222" });
  add(across, "text", { x: x, y: 12, "text-anchor": "middle" }, String(200 + i * 100));
  for (let k = 1; k < 4; k++) {
    add(across, "path", { d: `M${Math.round(x + k * 30) + 0.5} 7v3`, stroke: "#222" });
  }
}

const down = document.getElementById("vticks");
const height = down.parentNode.getBoundingClientRect().height;
for (let i = 0; (i - 1) * STEP + 110 < height; i++) {
  const y = Math.round(101 + (i - 1) * STEP);
  for (let k = 1; k < 4; k++) {
    add(down, "path", { d: `M9 ${Math.round(y + k * 30) + 0.5}h3`, stroke: "#222" });
  }
  if (y < 10) continue;
  add(down, "rect", { x: 5, y: y - 9, width: 12, height: 18, fill: "#fff" });
  add(down, "path", { d: `M3 ${y}h2M17 ${y}h2`, stroke: "#222" });
  add(down, "text", { transform: `translate(15 ${y}) rotate(-90)`, "text-anchor": "middle" }, String(800 - i * 100));
}
```

FILE: styles.css
```css
* { box-sizing: border-box; }
body {
  margin: 0;
  height: 100vh;
  display: flex;
  flex-direction: column;
  overflow: hidden;
  background: #f7f7f7;
  color: #222;
  font: 11px/12px "Open Sans", "Noto Sans", sans-serif;
}
button, input, select { font: inherit; color: inherit; }
button { border: 0; padding: 0; background: none; display: flex; align-items: center; justify-content: center; white-space: nowrap; }
svg { flex: none; display: block; }
.defs { position: absolute; width: 0; height: 0; }
.caret { width: 6px; height: 4px; }
.up { transform: rotate(180deg); }
.dot { width: 6px; height: 6px; border: 1px solid #888; border-radius: 50%; background: #ddd; flex: none; }

/* Title bar */
.titlebar { position: relative; z-index: 2; flex: none; height: 29px; display: flex; align-items: center; border-bottom: 1px solid #8c8c90; }
.logo { align-self: flex-start; flex: none; width: 137px; height: 33px; margin-left: 9px; padding-left: 5px; display: flex; align-items: center; gap: 4px; background: linear-gradient(#fff, #e4e4e6); border: 1px solid #999; border-top: 0; color: #c8372d; font-size: 15px; font-style: italic; }
.logo svg { margin-top: -6px; }
.menu { flex: none; display: flex; gap: 14px; margin-left: 26px; }
.pin { width: 46px; height: 28px; margin-left: 1px; padding-left: 10px; border-right: 2px solid #ccc; }
.quick { flex: none; display: flex; align-items: center; margin-left: 11px; }
.q { width: 24px; height: 24px; }
.split { width: 37px; height: 24px; justify-content: space-between; padding: 0 5px 0 4px; }
.select-tool { display: flex; height: 24px; border: 1px solid #aaa; }
.select-tool button { width: 23px; background: #bcbcbe; }
.select-tool button + button { width: 11px; background: none; }
.gear-caret { margin-left: 3px; }
.doc-title { flex: 1; text-align: center; white-space: nowrap; }
.search { flex: none; width: 190px; height: 21px; display: flex; align-items: center; padding: 0 3px 0 5px; gap: 5px; border: 1px solid #333; background: linear-gradient(90deg, #fff, #e8eef7); }
.search input { flex: 1; min-width: 0; border: 0; padding: 0; background: none; }
.search input::placeholder { color: #777; opacity: 1; }
.window-controls { flex: none; display: flex; align-items: center; margin-left: 4px; }
.window-controls button { width: 24px; height: 24px; color: #444; }
.window-controls .help { font-size: 17px; font-weight: 700; }
.window-controls button:nth-child(3) { width: 12px; }
.mouse { position: absolute; left: 809px; top: 23px; }

/* Ribbon */
.ribbon { flex: none; height: 82px; display: flex; padding-left: 4px; border-bottom: 1px solid #999; font-family: Lato, "Open Sans", sans-serif; }
.big { height: 80px; flex: none; flex-direction: column; justify-content: flex-start; padding-top: 17px; gap: 2px; }
.big.drop { padding-top: 10px; }
.big.drop .caret { margin-top: auto; margin-bottom: 9px; }
.sep { width: 1px; height: 73px; margin-top: 6px; background: #ccc; flex: none; }
.stack { flex: none; display: flex; flex-direction: column; padding: 6px 0 0 4px; }
.stack button { height: 24px; justify-content: flex-start; gap: 6px; }
.stack button:disabled { color: #bbb; }
.hot { background: #fafafa; }
.w58 { width: 58px; } .w43 { width: 43px; } .w50 { width: 50px; } .w42 { width: 42px; }
.w36 { width: 36px; } .w62 { width: 62px; } .w103 { width: 103px; }
.w135 { width: 135px; } .w41 { width: 41px; } .w106 { width: 106px; } .w116 { width: 116px; }
.abc { font-size: 9px; fill: #222; }

/* Tabs and rulers */
.tabrow { flex: none; height: 22px; display: flex; background: #c6c7ca; border-bottom: 1px solid #222; }
.tabs { flex: none; display: flex; height: 20px; }
.tabs button { background: #d4d4d4; border: 1px solid #999; border-left: 0; border-top: 0; }
.tabs .on { background: #f7f7f7; font-weight: 700; border-bottom: 0; color: #444; }
.t75 { width: 75px; } .t73 { width: 73px; } .t53 { width: 53px; } .t56 { width: 56px; } .t125 { width: 125px; } .t80 { width: 81px; }
.hruler { flex: 1; min-width: 0; height: 17px; margin-top: 3px; background: #e6e6da; border: 1px solid #333; border-right: 0; }
.hruler text, .vruler text { font: 10px "Liberation Sans", sans-serif; fill: #111; }
.work { flex: 1; min-height: 0; display: flex; }
.vruler { width: 22px; height: 100%; background: linear-gradient(90deg, #b0b1b6 3px, #222 3px, #222 4px, #e6e6da 4px, #e6e6da 18px, #222 18px, #222 19px, #b0b1b6 19px, #b0b1b6 21px, #333 21px); }
.document { flex: 1; min-width: 0; display: flex; flex-direction: column; }
.upper { flex: 1; min-height: 0; display: flex; }

/* Manager panel */
.manager { position: relative; z-index: 1; flex: none; width: 221px; padding: 4px 5px 0 1px; background: linear-gradient(90deg, #f7f7f7 215px, #999 215px, #999 216px, #f7f7f7 216px); border-right: 2px solid #222; }
.grip-dot { height: 17px; display: flex; align-items: center; justify-content: center; border: 1px solid #ccc; border-width: 1px 0; }
.mtabs { display: flex; height: 26px; padding-top: 3px; border-bottom: 1px solid #aaa; }
.mtabs button { width: 38px; background: #d2d2d4; border: 1px solid #aaa; border-bottom: 0; }
.mtabs .on { background: #f7f7f7; border-color: transparent #aaa transparent transparent; }
.mtabs .more { width: 20px; margin-left: auto; background: none; border: 0; }
.filter { display: flex; align-items: center; height: 24px; margin: 0 4px; padding-left: 2px; border: 1px solid #bbb; background: #fafafa; }
.filter input { flex: 1; min-width: 0; border: 0; padding: 0; background: none; }
.tree { margin: 0; padding: 0; list-style: none; }
.tree li { height: 21px; display: flex; align-items: center; gap: 4px; padding-left: 3px; white-space: nowrap; }
.tree .l1 { padding-left: 4px; }
.tree .l2 { padding-left: 25px; }
.tree i { width: 16px; display: flex; justify-content: center; }
.tree i::before { content: ""; border: 4px solid transparent; }
.tree .open::before { border-top: 5px solid #555; border-bottom: 0; }
.tree .shut::before { border-left: 5px solid #555; border-right: 0; }
.handle { position: absolute; right: -5px; top: 225px; width: 9px; height: 37px; background: #f7f7f7; border: 1px solid #777; border-left: 0; }

/* Drawing sheet */
.canvas { position: relative; flex: 1; min-width: 0; background: #e6e6da; }
.sheet { position: absolute; width: 100%; height: 100%; }
.zone path { stroke: #bfbfb9; fill: none; }
.letters { font: bold 7px "Liberation Mono", monospace; fill: #222; }
.ink path, .ink rect, .ink circle, .ink ellipse { fill: none; stroke: #111; stroke-width: 5; }
.ink .heavy { stroke-width: 6; }
.ink .dim { stroke: #1a1acb; stroke-width: 3; }
.ink .dash { stroke-dasharray: 45 5 5 8; }
.ink .thin { stroke-width: 2; }
.ink .arrow { fill: #1010a8; stroke: none; }
.ink .red { stroke: #e52222; stroke-width: 3; }
.ink .faint { stroke: #bbb; stroke-width: 3; }
.ink .grips { stroke: #f2b27a; stroke-width: 4; stroke-dasharray: 6 12; }
.ink .hidden-edge { stroke: #888; stroke-width: 3; }
.ink .dots { stroke-dasharray: 16 5 4 5; }
.note { font: bold 20px "Liberation Sans", sans-serif; fill: #1515a8; }
.note .bend { fill: #27a552; font: 20px "Liberation Mono", monospace; }
.solid path { fill: #fc8d70; stroke: #111; stroke-width: 6; stroke-linejoin: round; }
.solid .dark { fill: #70382c; }
.solid .edge { fill: #8b4635; }
.solid .line { fill: none; }
.solid .bowl { fill: url(#valley); stroke: none; }
.solid .slot { fill: none; stroke-width: 32; stroke-linecap: round; }
.solid .opening { fill: none; stroke: #e6e6da; stroke-width: 16; stroke-linecap: round; }
.solid .gap-cut { fill: #e6e6da; }
.solid .scribble { fill: none; stroke: #1818cf; stroke-width: 3; }
.solid .hole { fill: #c78170; stroke: #111; stroke-width: 6; }
.view-tools { position: absolute; left: 50%; margin-left: -126px; top: 4px; display: flex; align-items: center; }
.view-tools button { width: 24px; height: 22px; }
.view-tools .wide { width: 38px; gap: 8px; }
.view-tools .caret { opacity: .6; }
.dim-icon { opacity: .45; }
.doc-controls { position: absolute; right: 4px; top: 8px; display: flex; color: #888; }
.doc-controls button { width: 25px; height: 14px; }
.taskpane { position: absolute; right: 0; top: 49px; width: 23px; border: 1px solid #888; }
.taskpane button { width: 21px; height: 22px; background: #cfd0d2; border-bottom: 1px solid #999; }
.taskpane .on { background: #f7f7f7; }

/* Sheet tabs */
.sheettabs { flex: none; height: 15px; display: flex; background: #f7f7f7; border-top: 1px solid #999; }
.sheettabs .nav { width: 15px; background: #a9aaac; border-right: 1px solid #999; }
.sheettabs .current { width: 74px; gap: 2px; font-weight: 700; color: #111; }
.sheettabs .add { width: 35px; background: #d4d4d4; border: 1px solid #bbb; border-width: 0 1px; }

/* Line format bar */
.layerbar { flex: none; height: 31px; display: flex; align-items: center; padding-left: 3px; border-bottom: 1px solid #999; }
.grip { width: 3px; height: 24px; background: repeating-linear-gradient(#888 0 2px, transparent 2px 4px); }
.layerbar select { appearance: none; width: 92px; height: 23px; margin: 0 4px 0 9px; padding: 0 14px 0 3px; border: 1px solid #aaa; border-radius: 0; background: linear-gradient(45deg, transparent 45%, #555 45% 58%, transparent 58%) right 8px center / 4px 4px no-repeat, linear-gradient(-45deg, transparent 45%, #555 45% 58%, transparent 58%) right 4px center / 4px 4px no-repeat, #dedede; }
.vsep { width: 1px; height: 28px; margin: 0 4px 0 11px; background: #777; }
.format { display: flex; height: 30px; align-items: center; margin-left: 7px; padding-right: 8px; border-right: 1px solid #777; }
.format button { width: 25px; height: 26px; }

/* Status bar */
.status { flex: none; height: 17px; display: flex; align-items: center; padding-right: 1px; white-space: nowrap; }
.product { margin-right: auto; padding-left: 1px; }
.s-def { padding: 0 5px; border-right: 1px solid #ccc; }
.gap { width: 5px; }
.s-edit { padding: 0 3px; border: 1px solid #ccc; border-width: 0 1px; }
.s-scale, .s-unit { width: 100px; gap: 28px; border-right: 1px solid #ccc; padding-left: 10px; }
.s-unit { width: 148px; gap: 18px; border: 0; padding-right: 42px; }

/* Windows taskbar */
.taskbar { flex: none; height: 38px; display: flex; background: linear-gradient(90deg, #d8e5e9, #d3e1eb 70%, #d2e4e5); color: #111; }
.taskbar > button { width: 45px; border-bottom: 3px solid transparent; }
.taskbar > .gap3 { width: 48px; }
.taskbar > .run { width: 38px; margin: 0 4px; border-bottom-color: #c38c37; }
.taskbar > .active { width: 43px; margin: 0 2px; background: #f3f7f9; }
.cam { border-radius: 2px; }
.green { background: #59a51d; }
.coral { background: #f15d50; }
.sw { font: bold 10px "Liberation Sans", sans-serif; fill: #fff; }
.yr { font: bold 8px "Liberation Sans", sans-serif; fill: #fff; stroke: #222; stroke-width: 2px; paint-order: stroke; }
.tray { margin-left: auto; display: flex; align-items: center; gap: 9px; padding-right: 14px; }
.weather { gap: 9px; font-size: 12px; margin-right: 7px; }
.clock { display: block; line-height: 17px; text-align: center; margin-right: 8px; }
.notify { position: relative; width: 22px; height: 24px; justify-content: flex-start; }
.notify b { position: absolute; right: 0; bottom: -1px; width: 15px; height: 15px; border: 1px solid #777; border-radius: 50%; background: #d9e2e4; line-height: 13px; font-weight: 400; font-size: 10px; }
```
